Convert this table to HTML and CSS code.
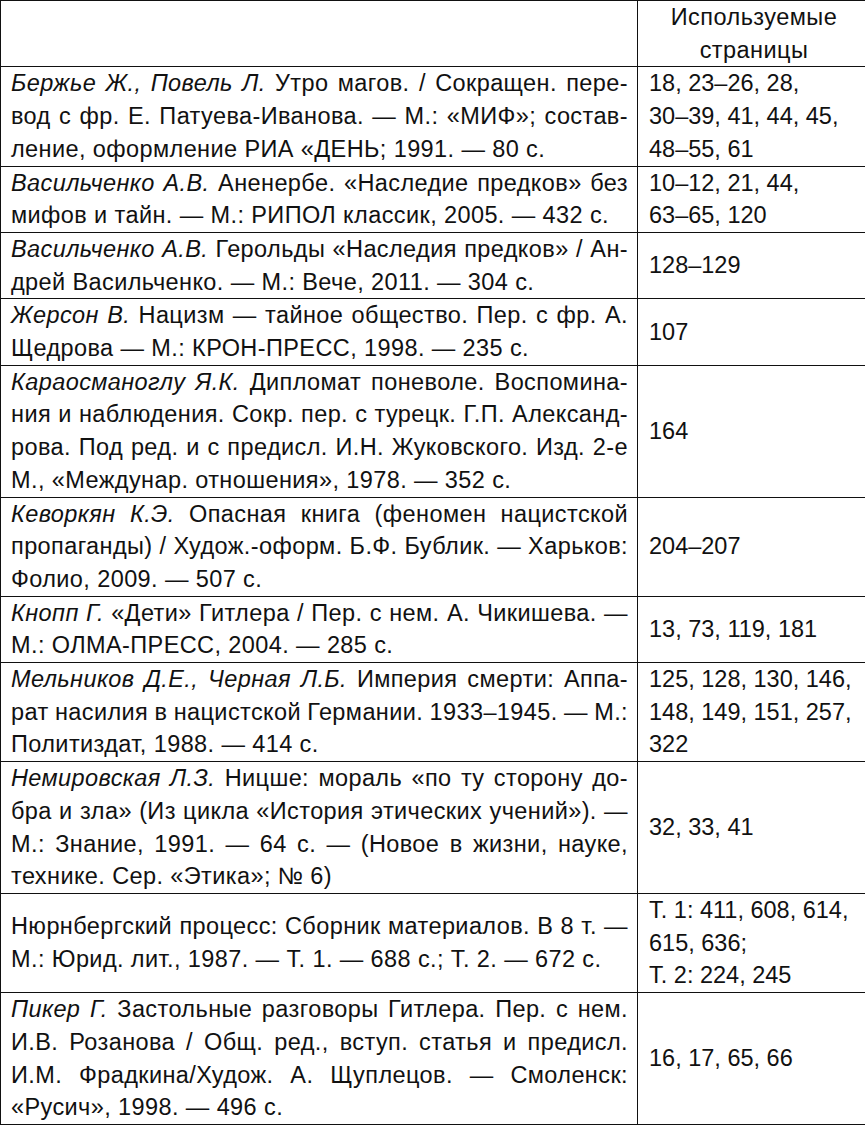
FILE: index.html
```html
<!DOCTYPE html>
<html lang="ru">
<head>
<meta charset="utf-8">
<title>Список литературы</title>
<link rel="stylesheet" href="styles.css">
</head>
<body>
<table class="refs">
  <colgroup><col class="c-src"><col class="c-pg"></colgroup>
  <tr class="head">
    <td class="src"></td>
    <td class="pg center"><span class="ln">Используемые</span><span class="ln">страницы</span></td>
  </tr>
  <tr>
    <td class="src">
      <span class="ln j"><i>Бержье Ж., Повель Л.</i> Утро магов. / Сокращен. пере-</span>
      <span class="ln j">вод с фр. Е. Патуева-Иванова. — М.: «МИФ»; состав-</span>
      <span class="ln">ление, оформление РИА «ДЕНЬ; 1991. — 80 с.</span>
    </td>
    <td class="pg"><span class="ln">18, 23–26, 28,</span><span class="ln">30–39, 41, 44, 45,</span><span class="ln">48–55, 61</span></td>
  </tr>
  <tr>
    <td class="src">
      <span class="ln j"><i>Васильченко А.В.</i> Аненербе. «Наследие предков» без</span>
      <span class="ln">мифов и тайн. — М.: РИПОЛ классик, 2005. — 432 с.</span>
    </td>
    <td class="pg"><span class="ln">10–12, 21, 44,</span><span class="ln">63–65, 120</span></td>
  </tr>
  <tr>
    <td class="src">
      <span class="ln j"><i>Васильченко А.В.</i> Герольды «Наследия предков» / Ан-</span>
      <span class="ln">дрей Васильченко. — М.: Вече, 2011. — 304 с.</span>
    </td>
    <td class="pg"><span class="ln">128–129</span></td>
  </tr>
  <tr>
    <td class="src">
      <span class="ln j"><i>Жерсон В.</i> Нацизм — тайное общество. Пер. с фр. А.</span>
      <span class="ln">Щедрова — М.: КРОН-ПРЕСС, 1998. — 235 с.</span>
    </td>
    <td class="pg"><span class="ln">107</span></td>
  </tr>
  <tr>
    <td class="src">
      <span class="ln j"><i>Караосманоглу Я.К.</i> Дипломат поневоле. Воспомина-</span>
      <span class="ln j">ния и наблюдения. Сокр. пер. с турецк. Г.П. Александ-</span>
      <span class="ln j">рова. Под ред. и с предисл. И.Н. Жуковского. Изд. 2-е</span>
      <span class="ln">М., «Междунар. отношения», 1978. — 352 с.</span>
    </td>
    <td class="pg"><span class="ln">164</span></td>
  </tr>
  <tr>
    <td class="src">
      <span class="ln j"><i>Кеворкян К.Э.</i> Опасная книга (феномен нацистской</span>
      <span class="ln j">пропаганды) / Худож.-оформ. Б.Ф. Бублик. — Харьков:</span>
      <span class="ln">Фолио, 2009. — 507 с.</span>
    </td>
    <td class="pg"><span class="ln">204–207</span></td>
  </tr>
  <tr>
    <td class="src">
      <span class="ln j"><i>Кнопп Г.</i> «Дети» Гитлера / Пер. с нем. А. Чикишева. —</span>
      <span class="ln">М.: ОЛМА-ПРЕСС, 2004. — 285 с.</span>
    </td>
    <td class="pg"><span class="ln">13, 73, 119, 181</span></td>
  </tr>
  <tr>
    <td class="src">
      <span class="ln j"><i>Мельников Д.Е., Черная Л.Б.</i> Империя смерти: Аппа-</span>
      <span class="ln j">рат насилия в нацистской Германии. 1933–1945. — М.:</span>
      <span class="ln">Политиздат, 1988. — 414 с.</span>
    </td>
    <td class="pg"><span class="ln">125, 128, 130, 146,</span><span class="ln">148, 149, 151, 257,</span><span class="ln">322</span></td>
  </tr>
  <tr>
    <td class="src">
      <span class="ln j"><i>Немировская Л.З.</i> Ницше: мораль «по ту сторону до-</span>
      <span class="ln j">бра и зла» (Из цикла «История этических учений»). —</span>
      <span class="ln j">М.: Знание, 1991. — 64 с. — (Новое в жизни, науке,</span>
      <span class="ln">технике. Сер. «Этика»; № 6)</span>
    </td>
    <td class="pg"><span class="ln">32, 33, 41</span></td>
  </tr>
  <tr>
    <td class="src">
      <span class="ln j">Нюрнбергский процесс: Сборник материалов. В 8 т. —</span>
      <span class="ln">М.: Юрид. лит., 1987. — Т. 1. — 688 с.; Т. 2. — 672 с.</span>
    </td>
    <td class="pg"><span class="ln">Т. 1: 411, 608, 614,</span><span class="ln">615, 636;</span><span class="ln">Т. 2: 224, 245</span></td>
  </tr>
  <tr>
    <td class="src">
      <span class="ln j"><i>Пикер Г.</i> Застольные разговоры Гитлера. Пер. с нем.</span>
      <span class="ln j">И.В. Розанова / Общ. ред., вступ. статья и предисл.</span>
      <span class="ln j">И.М. Фрадкина/Худож. А. Щуплецов. — Смоленск:</span>
      <span class="ln">«Русич», 1998. — 496 с.</span>
    </td>
    <td class="pg"><span class="ln">16, 17, 65, 66</span></td>
  </tr>
</table>
</body>
</html>
```

FILE: styles.css
```css
html, body {
  margin: 0;
  padding: 0;
  background: #fff;
}

.refs {
  border-collapse: collapse;
  width: 865px;
  table-layout: fixed;
  font-family: "Liberation Sans", Arial, sans-serif;
  font-size: 23.5px;
  line-height: 32.7px;
  color: #111;
}

.c-src { width: 637px; }
.c-pg { width: 228px; }

.refs td {
  border: 1.5px solid #111;
  vertical-align: middle;
  padding: 0;
}

.refs td.src {
  padding: 0 9px 0 10px;
  letter-spacing: 0.4px;
}

.refs td.pg {
  padding: 0 6px 0 11px;
}

.refs tr.head td {
  height: 64px;
}

.refs td.center {
  text-align: center;
  letter-spacing: 0.45px;
}

.ln {
  display: block;
  white-space: nowrap;
}

.ln.j {
  text-align: justify;
  text-align-last: justify;
  word-spacing: -1px;
}

i {
  font-style: italic;
}
```
